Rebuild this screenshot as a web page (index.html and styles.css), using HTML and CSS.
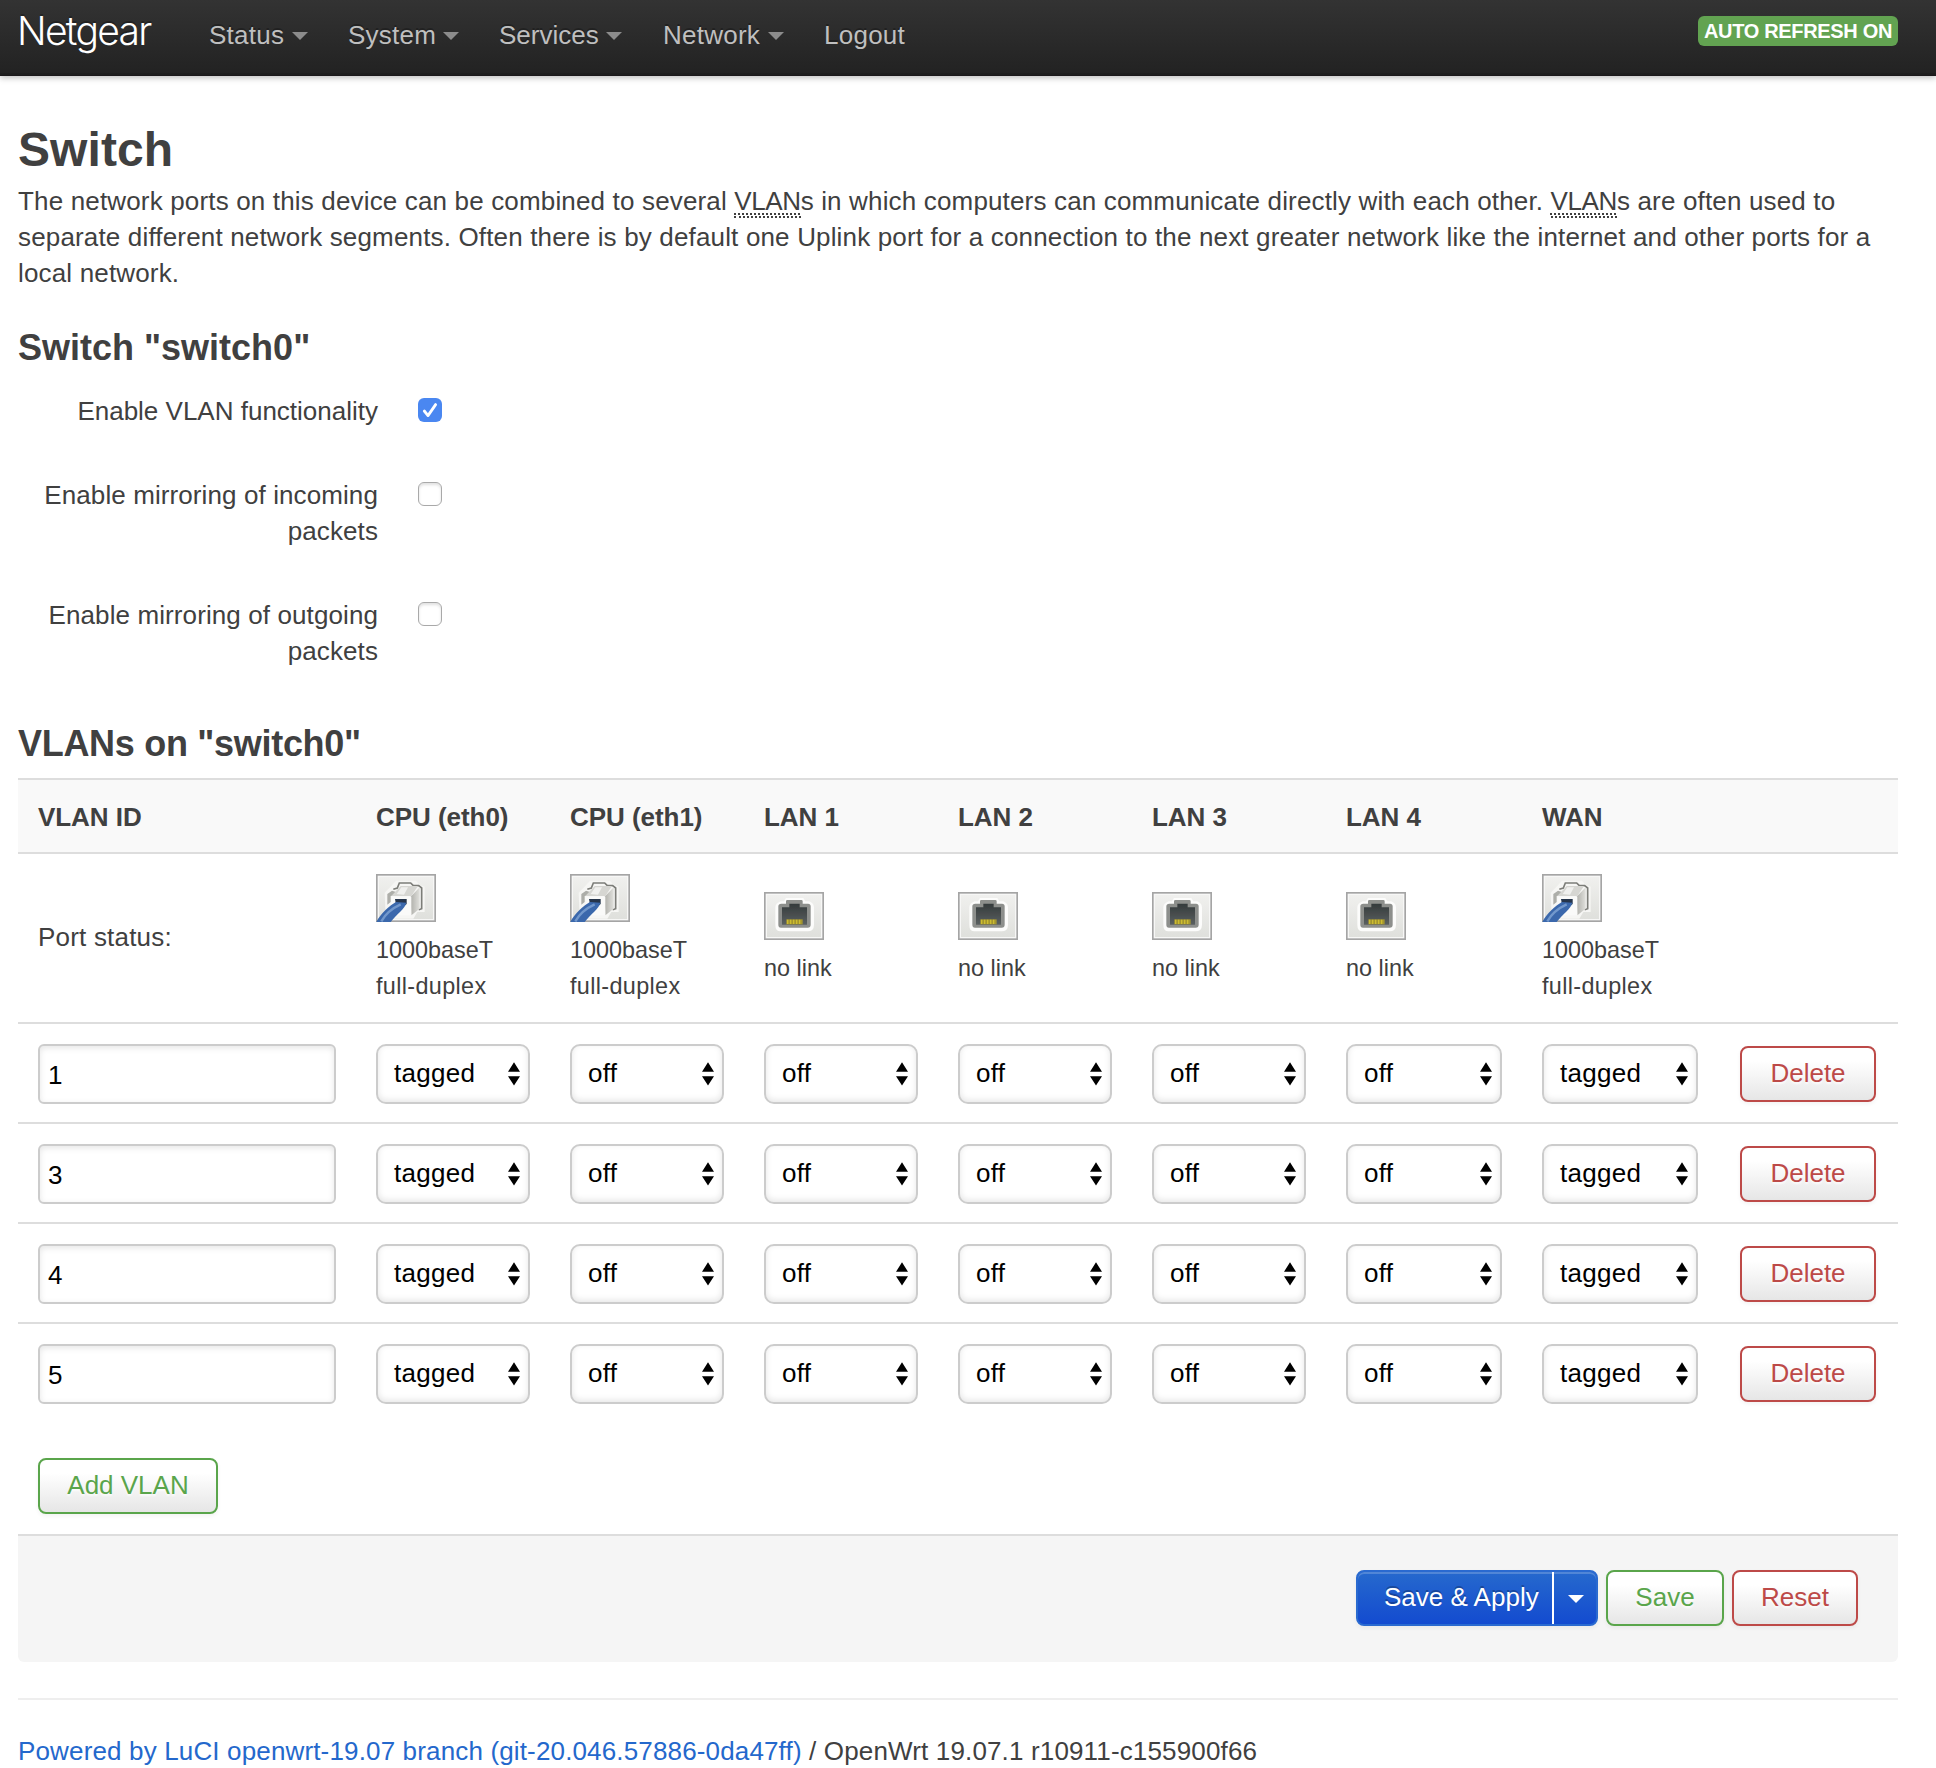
FILE: index.html
```html
<!DOCTYPE html>
<html lang="en">
<head>
<meta charset="utf-8">
<title>Netgear - Switch - LuCI</title>
<link rel="stylesheet" href="styles.css">
</head>
<body>
<svg class="defs" width="0" height="0" aria-hidden="true">
  <defs>
    <linearGradient id="plate" x1="0" y1="0" x2="0" y2="1"><stop offset="0" stop-color="#f0f0ee"/><stop offset="1" stop-color="#dfe0dc"/></linearGradient>
    <linearGradient id="jack" x1="0" y1="0" x2="0" y2="1"><stop offset="0" stop-color="#343a3b"/><stop offset="1" stop-color="#5b6060"/></linearGradient>
    <linearGradient id="side" x1="0" y1="0" x2="1" y2="0"><stop offset="0" stop-color="#b0b0ab"/><stop offset="1" stop-color="#e0e0dc"/></linearGradient>
    <filter id="soft"><feGaussianBlur stdDeviation="1.9"/></filter>
    <filter id="fine"><feGaussianBlur stdDeviation="1.2"/></filter>
    <symbol id="port-up" viewBox="0 0 180 144">
      <rect width="180" height="144" fill="#a5a5a5"/>
      <rect x="5" y="5" width="170" height="134" fill="#f7f7f6"/>
      <rect x="9" y="9" width="162" height="126" fill="url(#plate)"/>
      <g filter="url(#soft)">
        <path d="M26 56 40 42 60 20H120L130 32 146 38V114H124L112 134H40L28 104Z" fill="#f6f6f4"/>
        <path d="M52 46 64 42 70 27H104L112 35H128L137 42V104L128 107" fill="none" stroke="#7c7d78" stroke-width="5"/>
        <path d="M34 60 48 50 60 54V64L44 66V84L34 92Z" fill="#adaea9"/>
        <path d="M46 66 74 36H126L106 66Z" fill="#d6d6d2"/>
        <path d="M62 60 76 40H96L84 62Z" fill="#f0f0ee"/>
        <path d="M104 68 131 40V104L106 124Z" fill="url(#side)"/>
        <path d="M46 68H106V124H62L46 104Z" fill="#fafaf9"/>
      </g>
      <path d="M57 75H92V90L82 98 60 92Z" fill="#26344c" filter="url(#fine)"/>
      <path d="M1 144C14 118 42 94 60 84L91 86C87 104 62 120 44 144Z" fill="#3b68ac" filter="url(#fine)"/>
      <path d="M16 142C28 120 50 102 74 91" fill="none" stroke="#7298cc" stroke-width="7" filter="url(#fine)"/>
    </symbol>
    <symbol id="port-down" viewBox="0 0 180 144">
      <rect width="180" height="144" fill="#a5a5a5"/>
      <rect x="5" y="5" width="170" height="134" fill="#f7f7f6"/>
      <rect x="9" y="9" width="162" height="126" fill="url(#plate)"/>
      <g filter="url(#soft)">
        <path d="M50 28H60L66 18H118L124 28H136Q150 34 150 46V98Q150 118 130 118H50Q34 118 34 98V46Q34 34 50 28Z" fill="#fcfcfb"/>
        <path d="M52 35H66V28Q66 24 70 24H112Q116 24 116 28V35H132Q140 35 140 43V98Q140 107 131 107H51Q43 107 43 98V43Q43 35 52 35Z" fill="#8d8f8c"/>
        <path d="M54 46H76V35H107V46H129V98H54Z" fill="url(#jack)"/>
      </g>
      <path d="M67 82H116V97H67Z" fill="#a3952f" filter="url(#fine)"/>
      <path d="M71 83V96M80 83V96M89 83V96M98 83V96M107 83V96" stroke="#cdbc30" stroke-width="4"/>
    </symbol>
    <symbol id="updown" viewBox="0 0 12 24"><path d="M6 .3 12 9.7H0ZM0 14.2H12L6 23.6Z"/></symbol>
  </defs>
</svg>

<header class="topbar">
  <a class="brand">Netgear</a>
  <nav class="nav">
    <a class="n-status">Status<i class="caret"></i></a>
    <a class="n-system">System<i class="caret"></i></a>
    <a class="n-services">Services<i class="caret"></i></a>
    <a class="n-network">Network<i class="caret"></i></a>
    <a>Logout</a>
  </nav>
  <span class="badge">AUTO REFRESH ON</span>
</header>

<main class="content">
  <h2>Switch</h2>
  <p class="descr">The network ports on this device can be combined to several <abbr>VLAN</abbr>s in which computers can communicate directly with each other. <abbr>VLAN</abbr>s are often used to separate different network segments. Often there is by default one Uplink port for a connection to the next greater network like the internet and other ports for a local network.</p>

  <h3>Switch "switch0"</h3>
  <div class="options">
    <div class="option"><label class="short">Enable VLAN functionality</label><span class="check on"><svg viewBox="0 0 24 24"><path d="M6.3 13 10 17.6 17.6 6.6"/></svg></span></div>
    <div class="option"><label>Enable mirroring of incoming packets</label><span class="check"></span></div>
    <div class="option"><label>Enable mirroring of outgoing packets</label><span class="check"></span></div>
  </div>

  <h3 class="tight">VLANs on "switch0"</h3>
  <table class="vlans">
    <colgroup><col class="c-id"><col class="c-port"><col class="c-port"><col class="c-port"><col class="c-port"><col class="c-port"><col class="c-wide"><col class="c-wide"><col></colgroup>
    <tr class="head"><th>VLAN ID</th><th>CPU (eth0)</th><th>CPU (eth1)</th><th>LAN 1</th><th>LAN 2</th><th>LAN 3</th><th>LAN 4</th><th>WAN</th><th></th></tr>
    <tr class="ports">
      <td class="title">Port status:</td>
      <td><svg class="port"><use href="#port-up"/></svg><small>1000baseT<br><span>full-duplex</span></small></td>
      <td><svg class="port"><use href="#port-up"/></svg><small>1000baseT<br><span>full-duplex</span></small></td>
      <td><svg class="port"><use href="#port-down"/></svg><small>no link</small></td>
      <td><svg class="port"><use href="#port-down"/></svg><small>no link</small></td>
      <td><svg class="port"><use href="#port-down"/></svg><small>no link</small></td>
      <td><svg class="port"><use href="#port-down"/></svg><small>no link</small></td>
      <td><svg class="port"><use href="#port-up"/></svg><small>1000baseT<br><span>full-duplex</span></small></td>
      <td></td>
    </tr>
    <tr class="row">
      <td><div class="input">1</div></td>
      <td><div class="select">tagged<svg><use href="#updown"/></svg></div></td>
      <td><div class="select">off<svg><use href="#updown"/></svg></div></td>
      <td><div class="select">off<svg><use href="#updown"/></svg></div></td>
      <td><div class="select">off<svg><use href="#updown"/></svg></div></td>
      <td><div class="select">off<svg><use href="#updown"/></svg></div></td>
      <td><div class="select">off<svg><use href="#updown"/></svg></div></td>
      <td><div class="select">tagged<svg><use href="#updown"/></svg></div></td>
      <td><button class="btn red delete">Delete</button></td>
    </tr>
    <tr class="row">
      <td><div class="input">3</div></td>
      <td><div class="select">tagged<svg><use href="#updown"/></svg></div></td>
      <td><div class="select">off<svg><use href="#updown"/></svg></div></td>
      <td><div class="select">off<svg><use href="#updown"/></svg></div></td>
      <td><div class="select">off<svg><use href="#updown"/></svg></div></td>
      <td><div class="select">off<svg><use href="#updown"/></svg></div></td>
      <td><div class="select">off<svg><use href="#updown"/></svg></div></td>
      <td><div class="select">tagged<svg><use href="#updown"/></svg></div></td>
      <td><button class="btn red delete">Delete</button></td>
    </tr>
    <tr class="row">
      <td><div class="input">4</div></td>
      <td><div class="select">tagged<svg><use href="#updown"/></svg></div></td>
      <td><div class="select">off<svg><use href="#updown"/></svg></div></td>
      <td><div class="select">off<svg><use href="#updown"/></svg></div></td>
      <td><div class="select">off<svg><use href="#updown"/></svg></div></td>
      <td><div class="select">off<svg><use href="#updown"/></svg></div></td>
      <td><div class="select">off<svg><use href="#updown"/></svg></div></td>
      <td><div class="select">tagged<svg><use href="#updown"/></svg></div></td>
      <td><button class="btn red delete">Delete</button></td>
    </tr>
    <tr class="row">
      <td><div class="input">5</div></td>
      <td><div class="select">tagged<svg><use href="#updown"/></svg></div></td>
      <td><div class="select">off<svg><use href="#updown"/></svg></div></td>
      <td><div class="select">off<svg><use href="#updown"/></svg></div></td>
      <td><div class="select">off<svg><use href="#updown"/></svg></div></td>
      <td><div class="select">off<svg><use href="#updown"/></svg></div></td>
      <td><div class="select">off<svg><use href="#updown"/></svg></div></td>
      <td><div class="select">tagged<svg><use href="#updown"/></svg></div></td>
      <td><button class="btn red delete">Delete</button></td>
    </tr>
  </table>
  <div class="create"><button class="btn green add">Add VLAN</button></div>

  <div class="actions">
    <div class="btn apply"><span class="apply-text">Save &amp; Apply</span><span class="apply-open"><i></i></span></div>
    <button class="btn green save">Save</button>
    <button class="btn red reset">Reset</button>
  </div>

  <footer><a>Powered by LuCI openwrt-19.07 branch (git-20.046.57886-0da47ff)</a> / OpenWrt 19.07.1 r10911-c155900f66</footer>
</main>
</body>
</html>
```
FILE: styles.css
```css
* { box-sizing: border-box; }
body {
  margin: 0;
  background: #fff;
  color: #404040;
  font: 26px/36px "Liberation Sans", Arial, sans-serif;
}
.defs { display: block; width: 0; height: 0; }

.topbar {
  display: flex;
  align-items: flex-start;
  height: 76px;
  padding: 0 38px 0 17px;
  background: linear-gradient(#333, #222);
  border-bottom: 1px solid #1b191b;
  box-shadow: 0 2px 6px rgba(0, 0, 0, .25), inset 0 -2px 0 rgba(0, 0, 0, .1);
  text-shadow: 0 -2px 0 rgba(0, 0, 0, .25);
}
.brand {
  width: 192px;
  padding-top: 11px;
  font-family: Inter, sans-serif;
  font-size: 39px;
  font-weight: 300;
  line-height: 40px;
  letter-spacing: -1.7px;
  color: #fff;
}
.nav { display: flex; flex: 1; padding-top: 17px; color: #bfbfbf; letter-spacing: .25px; }
.nav a { display: flex; align-items: flex-start; justify-content: space-between; }
.n-status { width: 99px; margin-right: 40px; }
.n-system { width: 111px; margin-right: 40px; }
.n-services { width: 123px; margin-right: 41px; letter-spacing: 0; }
.n-network { width: 121px; margin-right: 40px; }
.caret {
  margin-top: 15px;
  border: 8px solid transparent;
  border-top-color: #8c8c8c;
  border-bottom: 0;
}
.badge {
  width: 200px;
  height: 30px;
  margin-top: 16px;
  border-radius: 6px;
  background: #62a351;
  color: #fff;
  font-size: 20px;
  font-weight: bold;
  line-height: 30px;
  letter-spacing: -.33px;
  text-align: center;
  text-shadow: none;
  white-space: nowrap;
}

.content { width: 1880px; margin: 40px 0 0 18px; }
h2, h3, p { margin: 0; }
h2 { font-size: 48px; line-height: 67px; letter-spacing: .1px; }
h3 { font-size: 36px; line-height: 68px; padding-top: 2px; }
.tight { letter-spacing: -.3px; }
.descr { letter-spacing: .16px; }
.descr + h3 { margin-top: 21px; }
.options + h3 { margin-top: 39px; }
abbr { letter-spacing: -.4px; text-decoration: underline dotted 2px; text-underline-offset: 3px; border-bottom: 2px dotted #404040; }

.options { display: flex; flex-direction: column; gap: 48px; margin-top: 11px; letter-spacing: .1px; }
.option { display: flex; align-items: flex-start; }
.option label { width: 360px; margin-right: 40px; text-align: right; }
.option .short { letter-spacing: 0; }
.check {
  width: 24px;
  height: 24px;
  margin-top: 5px;
  border: 1.5px solid #a9a9a9;
  border-radius: 6px;
  background: #fff;
  box-shadow: inset 0 2px 3px rgba(0, 0, 0, .12);
}
.check.on { border: 0; background: #4a87f1; box-shadow: none; }
.check svg { display: block; width: 24px; height: 24px; fill: none; stroke: #fff; stroke-width: 2.8; stroke-linecap: round; stroke-linejoin: round; }

.vlans { width: 1880px; table-layout: fixed; border-collapse: separate; border-spacing: 0; }
.c-id { width: 338px; }
.c-port { width: 194px; }
.c-wide { width: 196px; }
.vlans th, .vlans td { padding: 20px 20px 18px; border-top: 2px solid #ddd; text-align: left; vertical-align: middle; }
.vlans th { height: 74px; padding: 19px 20px 17px; background: #f9f9f9; letter-spacing: -.05px; white-space: nowrap; }
.vlans .title { padding-bottom: 22px; letter-spacing: .2px; }
.ports td { height: 170px; }
.port { display: block; width: 60px; height: 48px; margin-bottom: 10px; }
small { display: block; font-size: 23.4px; }
small span { letter-spacing: .35px; }
.row td { height: 100px; padding-top: 20px; }
.row td:last-child { padding-left: 22px; }
.input, .select {
  height: 60px;
  border: 2px solid #ccc;
  color: #000;
}
.input {
  width: 298px;
  padding: 11px 8px 0;
  border-radius: 6px;
  box-shadow: inset 0 2px 6px rgba(0, 0, 0, .1);
}
.select {
  position: relative;
  padding: 9px 16px 0;
  border-radius: 10px;
  box-shadow: inset 0 -2px 6px rgba(0, 0, 0, .1);
  letter-spacing: .3px;
}
.select svg { position: absolute; top: 16px; right: 8px; width: 12px; height: 24px; }

.btn {
  display: block;
  height: 56px;
  padding: 0 0 3px;
  border: 2px solid;
  border-radius: 8px;
  background: linear-gradient(#fff, #fff 25%, #e6e6e6);
  box-shadow: 0 2px 4px rgba(0, 0, 0, .05);
  font: 26px/36px "Liberation Sans", Arial, sans-serif;
  text-align: center;
  text-shadow: 0 2px 2px rgba(255, 255, 255, .75);
  white-space: nowrap;
}
.red { border-color: #bd4a48; color: #bd4a48; }
.green { border-color: #5aa54b; color: #5aa54b; }
.delete { width: 136px; }
.add { width: 180px; }
.create { height: 112px; padding: 36px 20px 0; }

.actions {
  display: flex;
  justify-content: flex-end;
  gap: 8px;
  height: 128px;
  padding: 34px 40px 0;
  border-top: 2px solid #ddd;
  border-radius: 0 0 6px 6px;
  background: #f5f5f5;
}
.apply {
  display: flex;
  width: 242px;
  padding: 0;
  border-color: #2a6ad0;
  background: linear-gradient(#2669cd, #134bd0);
  box-shadow: inset 0 2px 0 rgba(255, 255, 255, .2), 0 2px 4px rgba(0, 0, 0, .05);
  color: #fff;
  text-shadow: 0 -2px 0 rgba(0, 0, 0, .25);
}
.apply-text { width: 196px; padding: 7px 0 0 26px; border-right: 2px solid #fff; text-align: left; }
.apply-open { padding: 23px 0 0 14px; }
.apply-open i { display: block; border: 8px solid transparent; border-top-color: #fff; border-bottom: 0; }
.save { width: 118px; }
.reset { width: 126px; }

footer { margin-top: 36px; padding-top: 33px; border-top: 2px solid #eee; letter-spacing: .15px; white-space: nowrap; }
footer a { color: #2468cc; }
```
